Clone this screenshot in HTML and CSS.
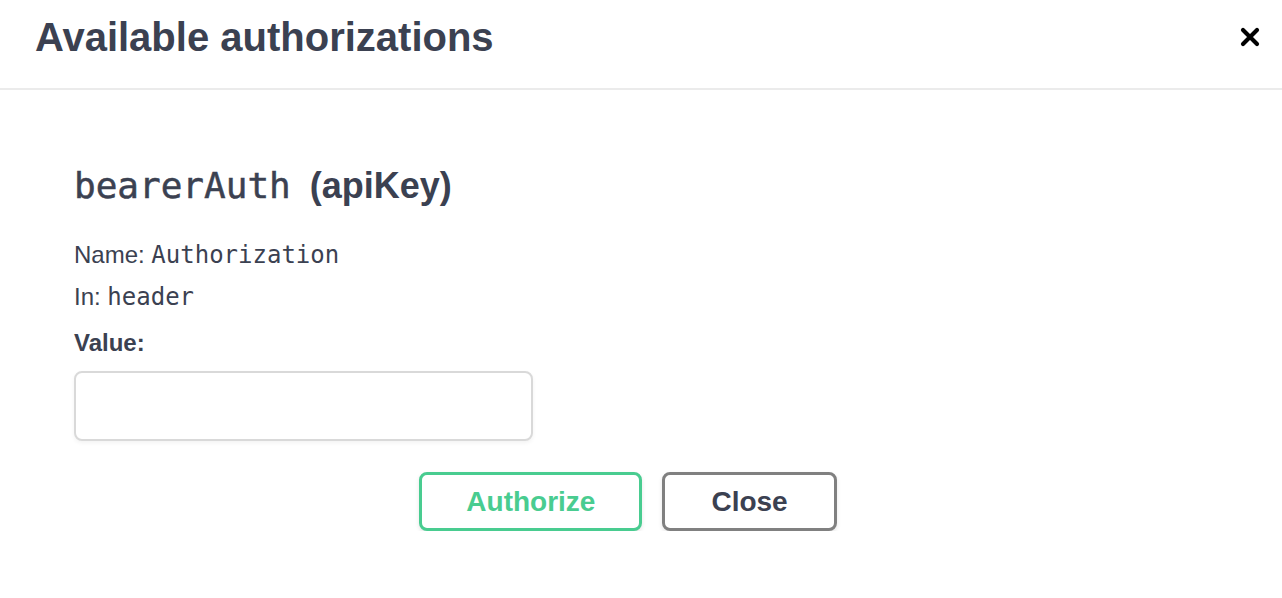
FILE: index.html
```html
<!DOCTYPE html>
<html lang="en">
<head>
<meta charset="utf-8">
<title>Available authorizations</title>
<link rel="stylesheet" href="styles.css">
</head>
<body>
<div class="modal">
  <div class="modal-header">
    <h3 class="modal-title">Available authorizations</h3>
    <button class="close-modal" aria-label="Close">
      <svg width="20" height="20" viewBox="0 0 20 20"><path d="M3 3 L17 17 M17 3 L3 17" stroke="#000" stroke-width="4.2" stroke-linecap="round" fill="none"/></svg>
    </button>
  </div>
  <div class="modal-body">
    <h4 class="scheme"><code>bearerAuth</code> (apiKey)</h4>
    <div class="row row-first">Name: <code>Authorization</code></div>
    <div class="row">In: <code>header</code></div>
    <label class="row label">Value:</label>
    <input class="value-input" type="text">
    <div class="btn-wrapper">
      <button class="btn authorize">Authorize</button>
      <button class="btn close">Close</button>
    </div>
  </div>
</div>
</body>
</html>
```
FILE: styles.css
```css
html, body {
  margin: 0;
  padding: 0;
  background: #fff;
}
body {
  font-family: "Liberation Sans", Arial, sans-serif;
  color: #3b4151;
}
code {
  font-family: "DejaVu Sans Mono", monospace;
}
.modal-header {
  height: 90px;
  box-sizing: border-box;
  border-bottom: 2px solid #ebebeb;
  display: flex;
  justify-content: space-between;
  align-items: flex-start;
  padding: 17px 22px 0 35px;
}
.modal-title {
  margin: 0;
  font-size: 40px;
  line-height: 40px;
  font-weight: 700;
}
.close-modal {
  border: 0;
  background: none;
  padding: 0;
  margin-top: 10px;
  width: 20px;
  height: 20px;
  display: flex;
}
.modal-body {
  padding: 74px 74px 0;
  display: flex;
  flex-direction: column;
  align-items: flex-start;
}
.scheme {
  margin: 0;
  font-size: 36px;
  line-height: 44px;
  font-weight: 700;
}
.scheme code {
  font-weight: 400;
  margin-right: 9px;
  -webkit-text-stroke: 0.5px #3b4151;
}
.row {
  font-size: 24px;
  line-height: 42px;
}
.row-first {
  margin-top: 26px;
}
.label {
  font-weight: 700;
  margin-top: 4px;
}
.value-input {
  margin-top: 7px;
  width: 459px;
  height: 70px;
  box-sizing: border-box;
  border: 2px solid #d9d9d9;
  border-radius: 8px;
  box-shadow: 0 2px 4px rgba(0,0,0,0.05);
  padding: 16px 20px;
  font-size: 24px;
}
.btn-wrapper {
  align-self: stretch;
  display: flex;
  justify-content: center;
  margin-top: 31px;
  padding-right: 6px;
}
.btn {
  font-family: "Liberation Sans", Arial, sans-serif;
  font-size: 28px;
  font-weight: 700;
  line-height: 33px;
  padding: 10px 44px;
  border: 3px solid #808080;
  border-radius: 8px;
  background: #fff;
  color: #3b4151;
  box-shadow: 0 2px 4px rgba(0,0,0,0.1);
  margin-right: 20px;
}
.btn.authorize {
  border-color: #49cc90;
  color: #49cc90;
}
.btn.close {
  padding: 10px 46px;
}
```
